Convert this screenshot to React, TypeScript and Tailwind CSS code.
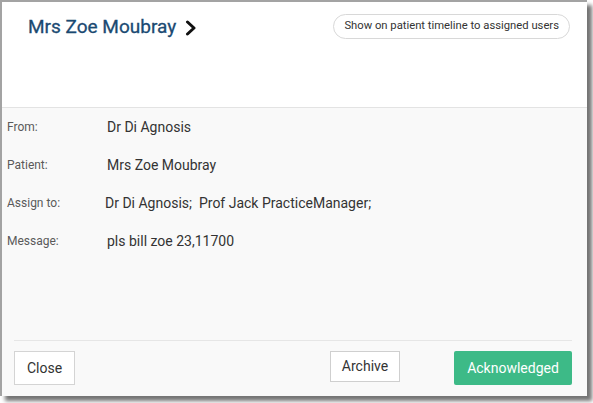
const rows = [
	{ label: "From:", value: "Dr Di Agnosis", indent: "pl-[100px]" },
	{ label: "Patient:", value: "Mrs Zoe Moubray", indent: "pl-[100px]" },
	{ label: "Assign to:", value: "Dr Di Agnosis;  Prof Jack PracticeManager;", indent: "pl-[98px]" },
	{ label: "Message:", value: "pls bill zoe 23,11700", indent: "pl-[100px]" },
];

const App = () => {
	return (
		<div className="w-[593px] h-[403px] bg-white font-['Roboto',sans-serif]">
			<div className="w-[587px] h-[396px] flex flex-col border-l-2 border-t-2 border-[#a3a3a3] bg-[#f9f9f9] shadow-[5px_5px_4px_rgba(0,0,0,0.55)]">
				<div className="h-[106px] shrink-0 bg-white border-b border-[#e3e3e3] flex justify-between items-start pl-[26px] pr-[17px] pt-[11px]">
					<div className="flex items-center gap-[9px] text-[#1b4a72] text-[19px] leading-[28px]">
						<span className="[-webkit-text-stroke:0.3px_#1b4a72]">Mrs Zoe Moubray</span>
						<svg width="12" height="16" viewBox="0 0 12 16" className="mt-[1px]">
							<path d="M2.5 2 L9 8 L2.5 14" fill="none" stroke="#111" strokeWidth="3" strokeLinecap="round" strokeLinejoin="round" />
						</svg>
					</div>
					<button className="mt-[1px] h-[25px] px-[10px] rounded-full border border-[#d8d8d8] bg-white text-[11.25px] text-[#333]">
						Show on patient timeline to assigned users
					</button>
				</div>
				<div className="flex-1 flex flex-col">
					{rows.map((r) => (
						<div key={r.label} className="h-[38px] flex items-center pl-[5px]">
							<span className="w-0 whitespace-nowrap text-[12px] text-[#5a5a5a]">{r.label}</span>
							<span className={`${r.indent} whitespace-pre text-[14px] text-[#333]`}>{r.value}</span>
						</div>
					))}
				</div>
				<div className="ml-[12px] mr-[15px] border-t border-[#e6e6e6] pt-[10px] pb-[11px] flex items-start justify-between">
					<button className="w-[61px] h-[34px] border border-[#d4d4d4] bg-white text-[14px] text-[#333]">Close</button>
					<div className="flex items-start gap-[54px]">
						<button className="w-[70px] h-[31px] border border-[#cfcfcf] bg-white text-[14px] text-[#333]">Archive</button>
						<button className="w-[118px] h-[34px] rounded-[2px] bg-[#3dba87] text-[14px] text-white">Acknowledged</button>
					</div>
				</div>
			</div>
		</div>
	);
};

export default App;
